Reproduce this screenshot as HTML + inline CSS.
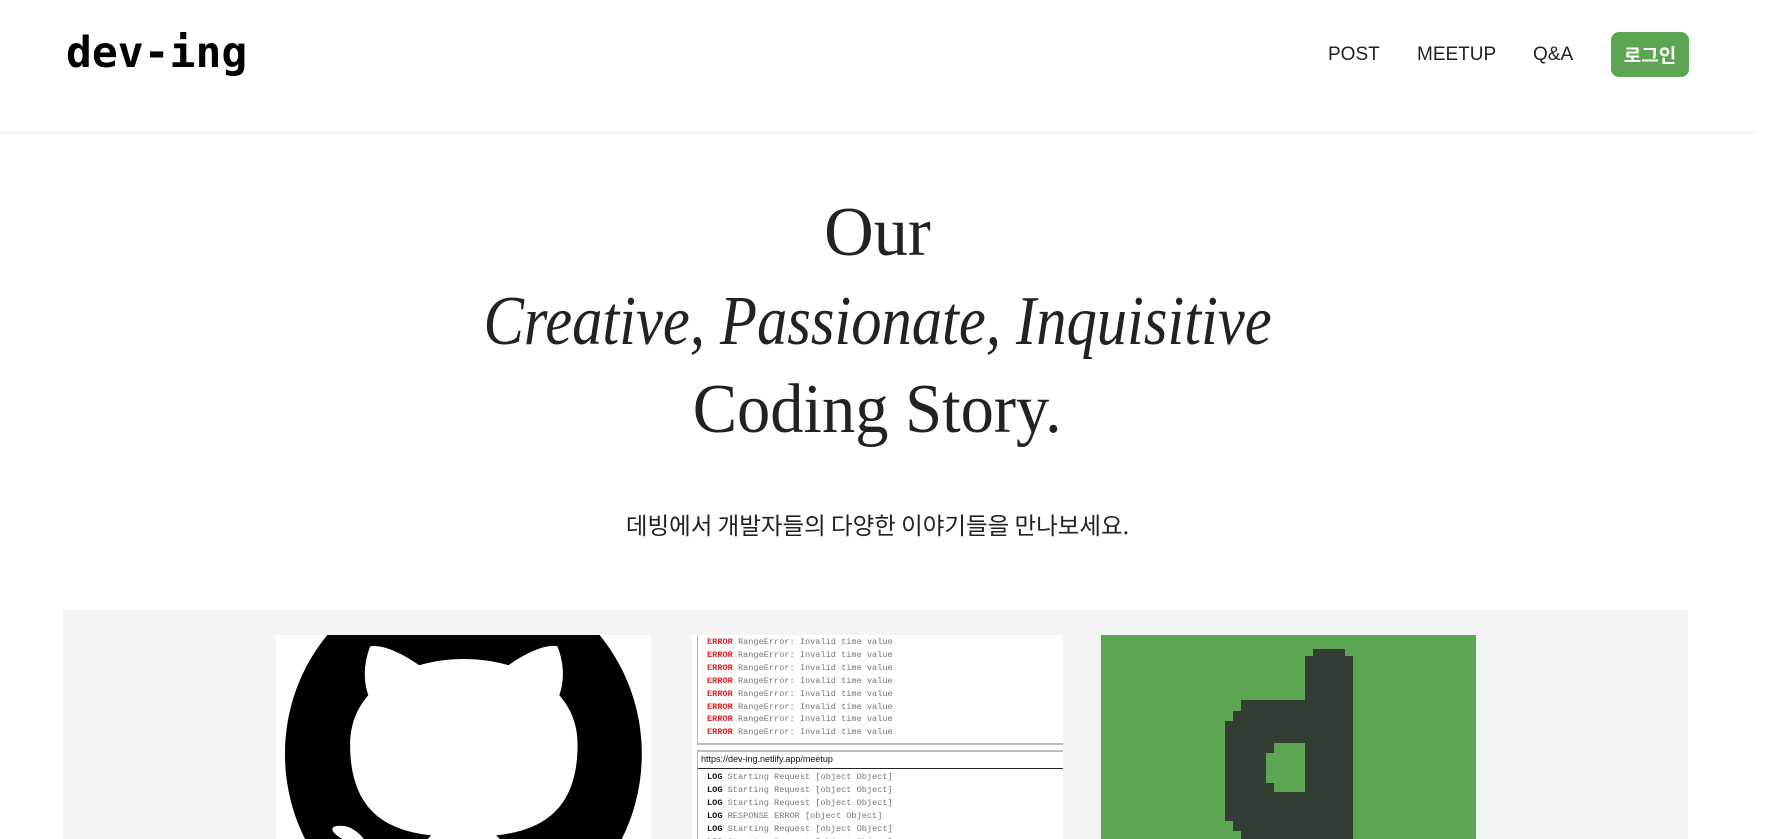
<!DOCTYPE html>
<html><head><meta charset="utf-8"><style>
*{margin:0;padding:0;box-sizing:border-box}
body{width:1772px;height:839px;overflow:hidden;background:#fff;font-family:"Liberation Sans","Noto Sans CJK KR",sans-serif;color:#222;position:relative}
.abs{position:absolute}
.logo{left:66px;top:32px;font-family:"DejaVu Sans Mono",monospace;font-weight:bold;font-size:43px;line-height:43px;color:#000}
.nav{top:44px;font-size:19px;color:#222}
.btn{left:1611px;top:32px;width:78px;height:45px;background:#5ca553;border-radius:8px;color:#fff;font-size:19px;font-weight:bold;text-align:center;line-height:45px;font-family:"Noto Sans CJK KR",sans-serif}
.hr{left:0;top:132px;width:1755px;height:1px;background:#ececec}
.h{left:0;width:1755px;text-align:center;font-family:"Liberation Serif",serif;font-size:70px;color:#222}
.h span{display:inline-block}
.sub{left:0;top:507px;width:1755px;text-align:center;font-size:23.5px;font-family:"Noto Sans CJK KR",sans-serif;color:#222}
.panel{left:63px;top:610px;width:1625px;height:229px;background:#f4f4f4}
.mono{font-family:"Liberation Mono",monospace;font-size:8.6px;color:#777;white-space:nowrap;line-height:12.9px}
.mono b{font-weight:bold}
</style></head><body>
<div class="abs logo">dev-ing</div>
<div class="abs nav" style="left:1328px">POST</div>
<div class="abs nav" style="left:1417px">MEETUP</div>
<div class="abs nav" style="left:1533px">Q&amp;A</div>
<div class="abs btn">로그인</div>
<div class="abs hr"></div>
<div class="abs h" style="top:193px"><span style="transform:scaleX(0.98)">Our</span></div>
<div class="abs h" style="top:282px;font-style:italic"><span style="transform:scaleX(0.865)">Creative, Passionate, Inquisitive</span></div>
<div class="abs h" style="top:370px"><span style="transform:scaleX(0.95)">Coding Story.</span></div>
<div class="abs sub">데빙에서 개발자들의 다양한 이야기들을 만나보세요.</div>
<div class="abs panel"></div>
<svg class="abs" style="left:276px;top:635px" width="375" height="204" viewBox="0 0 375 204">
<rect width="375" height="204" fill="#fff"/>
<g transform="translate(9,-65) scale(22.3,23)">
<path fill="#000" d="M8 0C3.58 0 0 3.58 0 8c0 3.54 2.29 6.530 5.47 7.59.4.07.55-.17.55-.38 0-.19-.01-.82-.01-1.49-2.01.37-2.53-.49-2.690-.94-.09-.23-.48-.94-.82-1.13-.28-.15-.68-.52-.01-.53.63-.01 1.08.58 1.230.82.72 1.21 1.87.87 2.33.66.07-.52.28-.87.51-1.06-1.78-.2-3.640-.89-3.64-3.95 0-.87.31-1.59.82-2.15-.08-.2-.36-1.02.08-2.12 0 0 .67-.21 2.2.82.64-.18 1.32-.27 2-.27.68 0 1.36.09 2 .27 1.53-1.04 2.2-.82 2.2-.82.44 1.1.16 1.92.08 2.12.51.56.82 1.27.82 2.15 0 3.07-1.870 3.75-3.65 3.95.29.25.54.73.54 1.48 0 1.07-.01 1.930-.01 2.2 0 .21.15.46.55.38A8.013 8.013 0 0016 8c0-4.42-3.58-8-8-8z"/>
</g>
</svg>
<div class="abs" style="left:692px;top:635px;width:371px;height:204px;background:#fff;overflow:hidden">
 <div class="abs" style="left:5px;top:0;width:366px;height:110px;border-left:1px solid #bbb;border-bottom:2px solid #bbb"></div>
 <div class="abs mono" style="left:15px;top:1px">
  <div><b style="color:#d22">ERROR</b> RangeError: Invalid time value</div>
  <div><b style="color:#d22">ERROR</b> RangeError: Invalid time value</div>
  <div><b style="color:#d22">ERROR</b> RangeError: Invalid time value</div>
  <div><b style="color:#d22">ERROR</b> RangeError: Invalid time value</div>
  <div><b style="color:#d22">ERROR</b> RangeError: Invalid time value</div>
  <div><b style="color:#d22">ERROR</b> RangeError: Invalid time value</div>
  <div><b style="color:#d22">ERROR</b> RangeError: Invalid time value</div>
  <div><b style="color:#d22">ERROR</b> RangeError: Invalid time value</div>
 </div>
 <div class="abs" style="left:5px;top:115px;width:366px;height:100px;border-left:1px solid #bbb;border-top:2px solid #bbb"></div>
 <div class="abs" style="left:9px;top:119px;font-size:9px;color:#111">https://dev-ing.netlify.app/meetup</div>
 <div class="abs" style="left:6px;top:133px;width:365px;height:1px;background:#222"></div>
 <div class="abs mono" style="left:15px;top:136px">
  <div><b style="color:#111">LOG</b> Starting Request [object Object]</div>
  <div><b style="color:#111">LOG</b> Starting Request [object Object]</div>
  <div><b style="color:#111">LOG</b> Starting Request [object Object]</div>
  <div><b style="color:#111">LOG</b> RESPONSE ERROR [object Object]</div>
  <div><b style="color:#111">LOG</b> Starting Request [object Object]</div>
  <div><b style="color:#111">LOG</b> Starting Request [object Object]</div>
 </div>
</div>
<svg class="abs" style="left:1101px;top:635px" width="375" height="204" viewBox="0 0 375 204">
<rect width="375" height="204" fill="#5ca553"/>
<path fill="#333d33" d="M212 14H244V21H252V204H140V196H132V186H124V86H132V76H140V65H204V21H212Z"/>
<rect x="173" y="108" width="31" height="49" fill="#5ca553"/>
<rect x="165" y="118" width="8" height="30" fill="#5ca553"/>
</svg>
</body></html>
